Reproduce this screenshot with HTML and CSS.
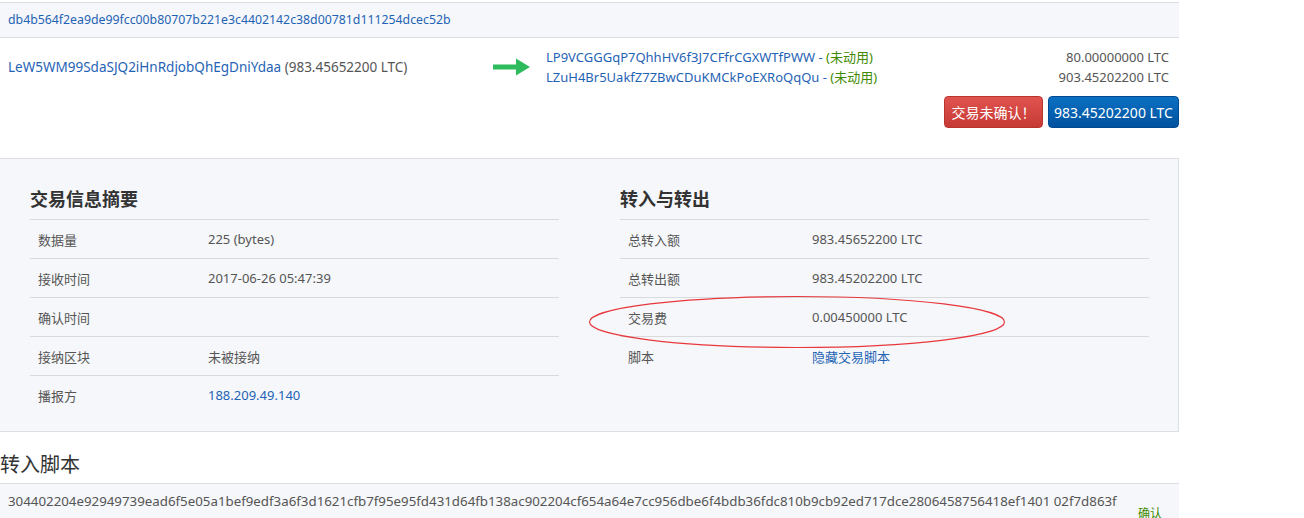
FILE: index.html
```html
<!DOCTYPE html>
<html lang="zh">
<head>
<meta charset="utf-8">
<link rel="stylesheet" href="styles.css">
</head>
<body>
<div class="page">
  <div class="tx-hash"><a href="#">db4b564f2ea9de99fcc00b80707b221e3c4402142c38d00781d111254dcec52b</a></div>

  <div class="io">
    <div class="io-in"><a href="#">LeW5WM99SdaSJQ2iHnRdjobQhEgDniYdaa</a> (983.45652200 LTC)</div>
    <div class="io-arrow">
      <svg width="38" height="18" viewBox="0 0 38 18"><path d="M0 6.5H23V0.5L37 9L23 17.5V11.5H0Z" fill="#2dbb5d"/></svg>
    </div>
    <div class="io-out">
      <div class="out-line"><span><a href="#">LP9VCGGGqP7QhhHV6f3J7CFfrCGXWTfPWW</a> - <span class="unspent">(未动用)</span></span><span class="amt">80.00000000 LTC</span></div>
      <div class="out-line"><span><a href="#">LZuH4Br5UakfZ7ZBwCDuKMCkPoEXRoQqQu</a> - <span class="unspent">(未动用)</span></span><span class="amt">903.45202200 LTC</span></div>
    </div>
  </div>
  <div class="btns">
    <button class="btn btn-red">交易未确认！</button>
    <button class="btn btn-blue">983.45202200 LTC</button>
  </div>

  <div class="panel">
    <div class="col">
      <h3>交易信息摘要</h3>
      <table class="info left">
        <tr><td class="k">数据量</td><td>225 (bytes)</td></tr>
        <tr><td class="k">接收时间</td><td>2017-06-26 05:47:39</td></tr>
        <tr><td class="k">确认时间</td><td></td></tr>
        <tr><td class="k">接纳区块</td><td>未被接纳</td></tr>
        <tr><td class="k">播报方</td><td><a href="#">188.209.49.140</a></td></tr>
      </table>
    </div>
    <div class="col">
      <h3>转入与转出</h3>
      <table class="info right">
        <tr><td class="k">总转入额</td><td>983.45652200 LTC</td></tr>
        <tr><td class="k">总转出额</td><td>983.45202200 LTC</td></tr>
        <tr class="fee"><td class="k">交易费</td><td>0.00450000 LTC<svg class="mark" width="420" height="56" viewBox="0 0 420 56"><ellipse cx="210" cy="28" rx="207.5" ry="25.5" fill="none" stroke="#e8383d" stroke-width="1.2"/></svg></td></tr>
        <tr><td class="k">脚本</td><td><a href="#">隐藏交易脚本</a></td></tr>
      </table>
    </div>
  </div>

  <h2 class="script-title">转入脚本</h2>
  <div class="script-row">
    <span class="script">304402204e92949739ead6f5e05a1bef9edf3a6f3d1621cfb7f95e95fd431d64fb138ac902204cf654a64e7cc956dbe6f4bdb36fdc810b9cb92ed717dce2806458756418ef1401 02f7d863f</span>
    <span class="ok">确认</span>
  </div>
</div>
</body>
</html>
```
FILE: styles.css
```css
html, body {
  margin: 0;
  padding: 0;
  background: #fff;
}
body {
  font-family: "Noto Sans", "Noto Sans CJK SC", sans-serif;
  font-size: 13px;
  color: #555;
  overflow: hidden;
}
a {
  color: #1f63b5;
  text-decoration: none;
}
.page {
  width: 1179px;
  padding-top: 2px;
}
.tx-hash {
  background: #f5f7fa;
  border-top: 1px solid #dcdfe3;
  border-bottom: 1px solid #dcdfe3;
  height: 34px;
  line-height: 34px;
  padding-left: 8px;
  font-size: 12.3px;
}
.io {
  display: flex;
  align-items: center;
  padding-top: 9px;
}
.io-in {
  width: 485px;
  padding-left: 8px;
  line-height: 20px;
  font-size: 13.5px;
}
.io-arrow {
  width: 53px;
  display: flex;
  align-items: center;
}
.io-out {
  flex: 1;
  padding-right: 10px;
}
.out-line {
  display: flex;
  justify-content: space-between;
  line-height: 20px;
  color: #1f63b5;
}
.unspent {
  color: #3f8a00;
}
.amt {
  color: #555;
}
.btns {
  display: flex;
  justify-content: flex-end;
  gap: 5px;
  margin-top: 9px;
  margin-bottom: 30px;
}
.btn {
  font-family: "Noto Sans", "Noto Sans CJK SC", sans-serif;
  font-size: 14px;
  color: #fff;
  height: 32px;
  border-radius: 4px;
  padding: 0;
  cursor: pointer;
}
.btn-red {
  width: 99px;
  background: linear-gradient(#e0534f, #c63a35);
  border: 1px solid #b9332f;
}
.btn-blue {
  width: 131px;
  background: linear-gradient(#0b70c2, #00529f);
  border: 1px solid #004a91;
}
.panel {
  display: grid;
  grid-template-columns: 529px 529px;
  column-gap: 61px;
  background: #f5f7fa;
  border-top: 1px solid #dcdfe3;
  border-right: 1px solid #dcdfe3;
  border-bottom: 1px solid #dcdfe3;
  padding: 28px 29px 17px 30px;
}
.col h3 {
  margin: 0 0 8px 0;
  font-size: 18px;
  line-height: 24px;
  font-weight: bold;
  color: #333;
}
.info {
  width: 100%;
  border-collapse: collapse;
}
.info td {
  border-top: 1px solid #d8dadd;
  height: 38px;
  padding: 0;
  vertical-align: middle;
}
.info td.k {
  padding-left: 8px;
}
.info.left td.k {
  width: 170px;
}
.info.right td.k {
  width: 184px;
}
.fee td {
  position: relative;
}
.fee .mark {
  position: absolute;
  left: -225px;
  top: -4px;
  pointer-events: none;
}
.script-title {
  margin: 19px 0 0 0;
  font-size: 20px;
  line-height: 28px;
  font-weight: normal;
  color: #333;
  height: 32px;
  border-bottom: 1px solid #dcdfe3;
}
.script-row {
  background: #f5f7fa;
  display: flex;
  justify-content: space-between;
  padding: 8px 0 0 8px;
  height: 40px;
  box-sizing: border-box;
}
.script {
  line-height: 18px;
  font-size: 13.3px;
}
.ok {
  color: #3f8a00;
  font-size: 12px;
  margin-top: 12px;
  margin-right: 17px;
}
```
